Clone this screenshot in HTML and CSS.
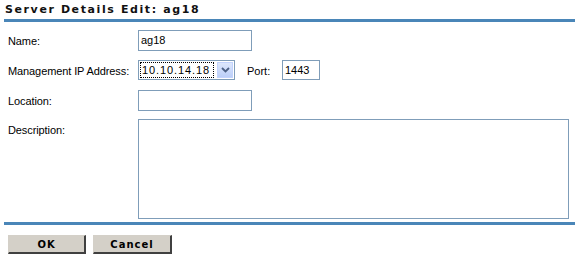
FILE: index.html
```html
<!DOCTYPE html>
<html>
<head>
<meta charset="utf-8">
<link rel="stylesheet" href="styles.css">
</head>
<body>
<div class="page">
  <h1 class="title">Server Details Edit: ag18</h1>
  <div class="form">
    <div class="row row-name">
      <label class="label">Name:</label>
      <div class="input wide">ag18</div>
    </div>
    <div class="row row-ip">
      <label class="label">Management IP Address:</label>
      <div class="select">
        <span class="select-text">10.10.14.18</span>
        <span class="select-btn">
          <svg width="9" height="6" viewBox="0 0 9 6"><path d="M1 1 L4.5 4.5 L8 1" fill="none" stroke="#4d6185" stroke-width="1.8"/></svg>
        </span>
      </div>
      <label class="port-label">Port:</label>
      <div class="input port">1443</div>
    </div>
    <div class="row row-loc">
      <label class="label">Location:</label>
      <div class="input wide"></div>
    </div>
    <div class="row row-desc">
      <label class="label">Description:</label>
      <div class="textarea"></div>
    </div>
  </div>
  <div class="actions">
    <button class="btn btn-ok">OK</button>
    <button class="btn btn-cancel">Cancel</button>
  </div>
</div>
</body>
</html>
```
FILE: styles.css
```css
html, body {
  margin: 0;
  padding: 0;
  background: #ffffff;
}
body {
  font-family: "Liberation Sans", Arial, sans-serif;
  font-size: 11px;
  color: #000;
}
.page {
  padding-left: 4px;
}
.title {
  margin: 0;
  padding: 3px 0 0 1px;
  height: 16px;
  font-family: "DejaVu Sans", Verdana, sans-serif;
  font-weight: bold;
  font-size: 11px;
  line-height: 14px;
  letter-spacing: 1.6px;
  color: #111;
  border-bottom: 3px solid #4a86b8;
}
.form {
  padding-left: 4px;
  padding-top: 8px;
  height: 203px;
  box-sizing: border-box;
  border-bottom: 3px solid #4a86b8;
}
.row {
  display: flex;
  align-items: flex-start;
}
.label {
  width: 130px;
  flex: none;
  padding-top: 5px;
  line-height: 12px;
  letter-spacing: -0.1px;
}
.row-name { height: 30px; }
.row-ip { height: 30px; }
.row-loc { height: 29px; }
.input {
  box-sizing: border-box;
  height: 21px;
  border: 1px solid #7f9db9;
  padding: 3px 0 0 2px;
  line-height: 13px;
  background: #fff;
}
.wide { width: 114px; }
.port { width: 38px; height: 20px; }
.select {
  box-sizing: border-box;
  width: 97px;
  height: 20px;
  border: 1px solid #7f9db9;
  display: flex;
  align-items: stretch;
  padding: 1px;
}
.select-text {
  flex: 1;
  border: 1px dotted #000;
  padding: 1px 0 0 1px;
  line-height: 13px;
  font-size: 11px;
  letter-spacing: 0.9px;
}
.select-btn {
  width: 16px;
  margin-left: 3px;
  background: linear-gradient(#dde7fc, #bccff8);
  border: 1px solid #c3d3fd;
  box-sizing: border-box;
  display: flex;
  align-items: center;
  justify-content: center;
}
.port-label {
  padding: 5px 0 0 12px;
  width: 35px;
  line-height: 12px;
}
.textarea {
  box-sizing: border-box;
  width: 431px;
  height: 100px;
  border: 1px solid #7f9db9;
  background: #fff;
}
.actions {
  display: flex;
  gap: 7px;
  padding: 10px 0 0 4px;
}
.btn {
  box-sizing: border-box;
  height: 19px;
  margin: 0;
  padding: 0;
  background: #d4d0c8;
  border: 1px solid #d4d0c8;
  border-right: 2px solid #404040;
  border-bottom: 2px solid #404040;
  font-family: "DejaVu Sans", Verdana, sans-serif;
  font-weight: bold;
  font-size: 10px;
  letter-spacing: 1px;
  color: #000;
}
.btn-ok { width: 78px; }
.btn-cancel { width: 79px; }
```
